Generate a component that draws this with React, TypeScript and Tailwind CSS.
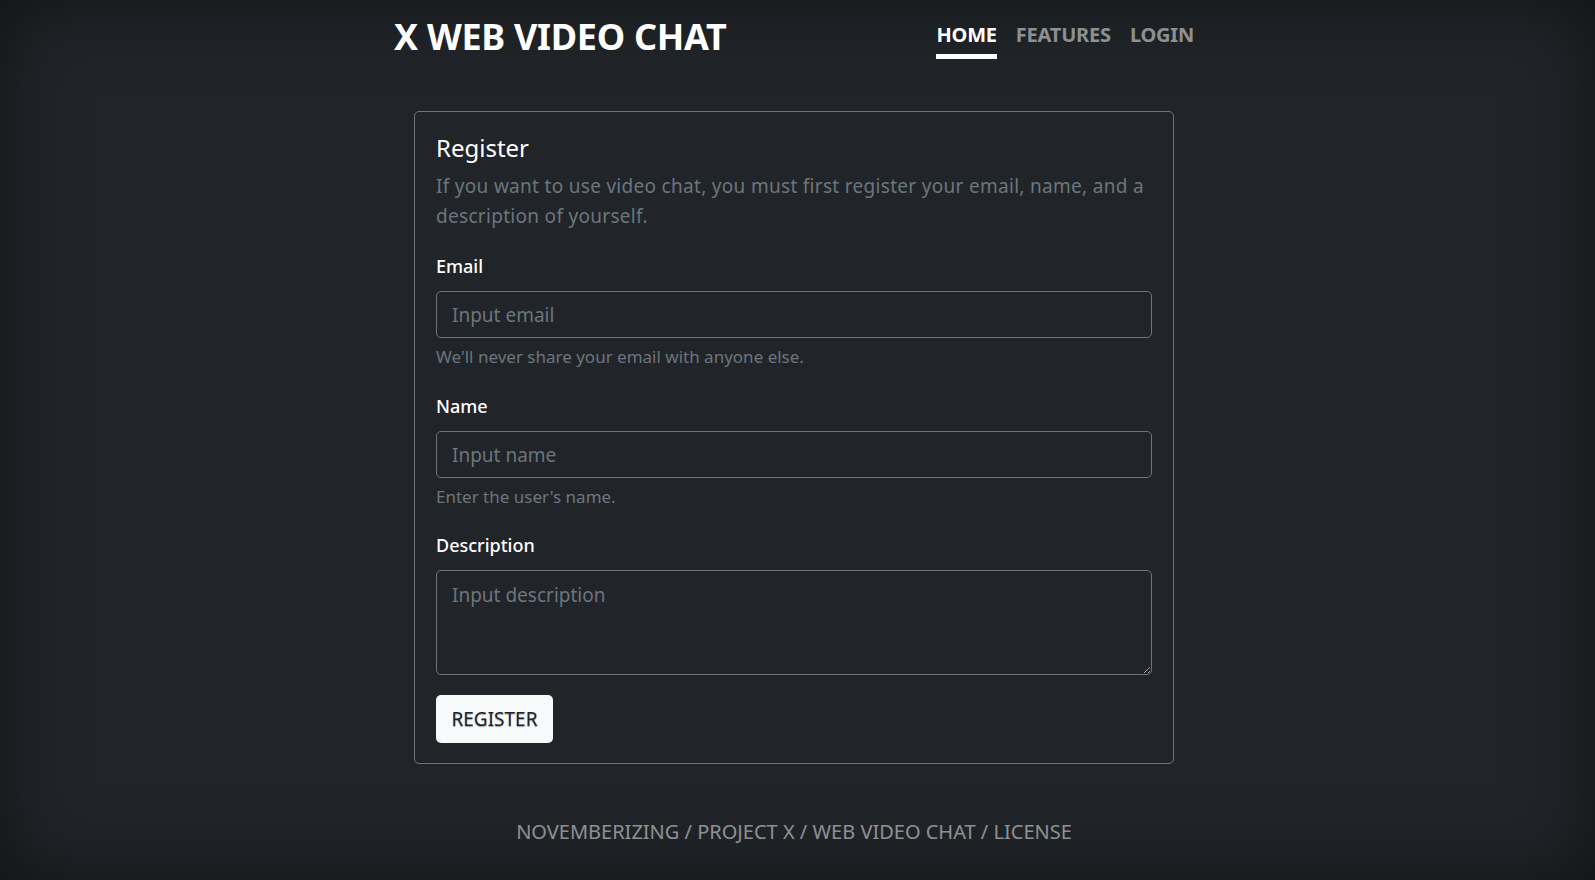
import React from "react";

export default function App() {
  const font = { fontFamily: '"Noto Sans", "Open Sans", sans-serif' };
  const inputCls =
    "mt-[11px] block w-full h-[47px] rounded-[5px] border border-[#6c757d] bg-transparent px-[15px] text-[19px] placeholder-[#6c757d] outline-none";
  return (
    <div
      className="min-h-[880px] w-full bg-[#212529] shadow-[inset_0_0_5rem_rgba(0,0,0,0.5)] flex justify-center pr-[7px] text-white"
      style={font}
    >
      <div className="w-[800px] flex flex-col">
        <header className="flex items-start justify-between h-[111px]">
          <h3 className="text-[36px] font-bold leading-none mt-[19px] tracking-[-0.3px]">X WEB VIDEO CHAT</h3>
          <nav className="flex gap-[19px] mt-[25px] mr-0 text-[20px] font-bold leading-none tracking-[-0.2px]">
            <a className="pb-[9px] border-b-[5px] border-white text-white">HOME</a>
            <a className="pb-[9px] border-b-[5px] border-transparent text-white/50">FEATURES</a>
            <a className="pb-[9px] border-b-[5px] border-transparent text-white/50">LOGIN</a>
          </nav>
        </header>
        <div className="mx-[20px] border border-[#6c757d] rounded-[5px] px-[21px] pt-[21px] pb-[20px]">
          <h5 className="text-[24px] leading-[30px]">Register</h5>
          <p className="mt-[8px] text-[19px] leading-[30px] tracking-[0.3px] text-[#6c757d]">
            If you want to use video chat, you must first register your email, name, and a description of yourself.
          </p>
          <div className="mt-[21px]">
            <label className="block text-[18px] font-medium leading-[28px]">Email</label>
            <input className={inputCls} placeholder="Input email" />
            <div className="mt-[7px] text-[17px] leading-[24px] text-[#6c757d]">We'll never share your email with anyone else.</div>
          </div>
          <div className="mt-[23px]">
            <label className="block text-[18px] font-medium leading-[28px]">Name</label>
            <input className={inputCls} placeholder="Input name" />
            <div className="mt-[7px] text-[17px] leading-[24px] text-[#6c757d]">Enter the user's name.</div>
          </div>
          <div className="mt-[22px]">
            <label className="block text-[18px] font-medium leading-[28px]">Description</label>
            <textarea
              className="mt-[11px] block w-full h-[105px] rounded-[5px] border border-[#6c757d] bg-transparent px-[15px] py-[10px] text-[19px] leading-[28px] placeholder-[#6c757d] outline-none"
              placeholder="Input description"
            />
          </div>
          <button className="mt-[20px] h-[48px] w-[117px] rounded-[5px] bg-[#f8f9fa] text-[19px] text-[#212529] [text-shadow:0_1px_1px_rgba(0,0,0,0.35)]">
            REGISTER
          </button>
        </div>
        <footer className="mt-[53px] text-center text-[20px] text-white/50">
          NOVEMBERIZING / PROJECT X / WEB VIDEO CHAT / LICENSE
        </footer>
      </div>
    </div>
  );
}
